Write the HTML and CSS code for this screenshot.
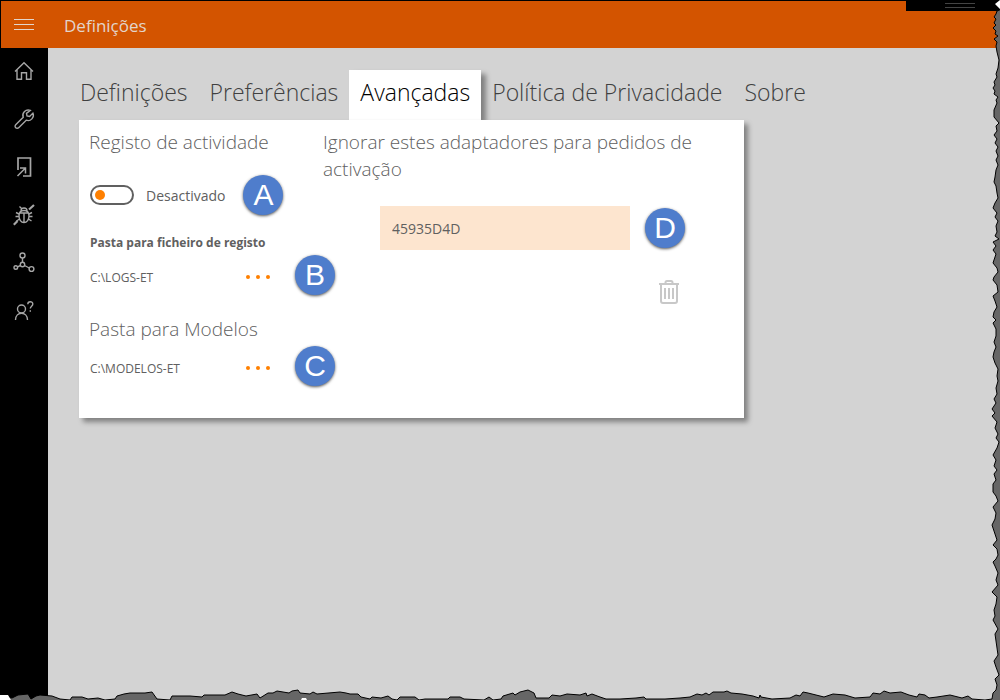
FILE: index.html
```html
<!DOCTYPE html>
<html lang="pt">
<head>
    <meta charset="UTF-8">
    <meta name="viewport" content="width=device-width, initial-scale=1.0">
    <title>Definições</title>
    <link rel="stylesheet" href="styles.css">
</head>
<body>
    <header class="topbar">
        <button class="menu-button" type="button" aria-label="Menu">
            <svg width="20" height="12" viewBox="0 0 20 12"><path d="M0 .5h20M0 5.5h20M0 10.5h20"/></svg>
        </button>
        <h1>Definições</h1>
        <div class="window-grip"></div>
    </header>

    <div class="layout">
        <nav class="sidebar">
            <a href="#" aria-label="Início">
                <svg width="24" height="24" viewBox="0 0 24 24"><path d="M3 12.5 12 3.7l9 8.8M5 11v9.3h4.5v-6.6h5v6.6H19V11"/></svg>
            </a>
            <a href="#" aria-label="Ferramentas">
                <svg width="24" height="24" viewBox="0 0 24 24"><path d="M18.3 3.400a5.400 5.400 0 0 0-7.100 6.900l-7.500 7.400a2.100 2.100 0 0 0 3 3l7.500-7.500a5.300 5.300 0 0 0 6.700-7.100l-3.300 3.300-2.600-.5-.5-2.500z"/></svg>
            </a>
            <a href="#" aria-label="Atalho">
                <svg width="24" height="24" viewBox="0 0 24 24"><path stroke-width="1.7" d="M6 15V3h12.500v18H11"/><path stroke-width="1.5" d="M5.500 21l8-8M8 13h5.500v5.500"/></svg>
            </a>
            <a href="#" aria-label="Diagnóstico">
                <svg width="24" height="24" viewBox="0 0 24 24"><path d="M12 7.500c-3 0-5 2-5 5.500s2 6.500 5 6.500 5-3 5-6.500-2-5.500-5-5.500zM7.500 10h9M12 10v9.500M9 8c0-4 6-4 6 0M9.500 5.500 7.500 3.500M7 11 4 9.500M7 13.500H3.500M7.500 16 4.500 18M17 11l3-1.500M17 13.500h3.500M16.500 16l3 2"/><path stroke-width="2.2" d="M17 6.500 22 2M5.500 18 1.800 21.700"/></svg>
            </a>
            <a href="#" aria-label="Rede">
                <svg width="24" height="24" viewBox="0 0 24 24"><circle cx="10.5" cy="4.5" r="2.500"/><circle cx="10.5" cy="13.5" r="2.200"/><circle cx="3.800" cy="16.500" r="1.800"/><circle cx="19.500" cy="18" r="2.400"/><path d="M10.500 7v4.300M8.500 14.500l-3 1.300M12.500 14.500l4.800 2.500"/></svg>
            </a>
            <a href="#" aria-label="Ajuda">
                <svg width="24" height="24" viewBox="0 0 24 24"><circle cx="9.500" cy="10" r="4"/><path d="M3.500 21c0-9 12-9 12 0M15.800 5.200c0-3.300 5-3.200 5-.2 0 2.200-2.500 2.200-2.500 4.500M18.300 11.200v1.500"/></svg>
            </a>
        </nav>

        <main class="content">
            <div class="tabs" role="tablist">
                <button class="tab" type="button" role="tab">Definições</button>
                <button class="tab" type="button" role="tab">Preferências</button>
                <button class="tab active" type="button" role="tab" aria-selected="true">Avançadas</button>
                <button class="tab" type="button" role="tab">Política de Privacidade</button>
                <button class="tab" type="button" role="tab">Sobre</button>
            </div>

            <section class="panel" role="tabpanel">
                <div class="folders">
                    <h2>Registo de actividade</h2>
                    <div class="row log-row">
                        <input class="switch" type="checkbox" id="log-switch">
                        <label for="log-switch">Desactivado</label>
                        <span class="badge">A</span>
                    </div>
                    <h3>Pasta para ficheiro de registo</h3>
                    <div class="row">
                        <span class="path">C:\LOGS-ET</span>
                        <button class="browse" type="button" aria-label="Procurar pasta de registo"><i></i><i></i><i></i></button>
                        <span class="badge">B</span>
                    </div>
                    <h2 class="models-title">Pasta para Modelos</h2>
                    <div class="row">
                        <span class="path">C:\MODELOS-ET</span>
                        <button class="browse" type="button" aria-label="Procurar pasta de modelos"><i></i><i></i><i></i></button>
                        <span class="badge">C</span>
                    </div>
                </div>

                <div class="adapters">
                    <h2><label for="adapter">Ignorar estes adaptadores para pedidos de activação</label></h2>
                    <div class="adapter-row">
                        <input class="adapter-input" id="adapter" type="text" value="45935D4D">
                        <span class="badge">D</span>
                    </div>
                    <div class="adapter-tools">
                        <button class="trash" type="button" aria-label="Eliminar">
                            <svg width="20" height="24" viewBox="0 0 20 24"><path d="M0 4h20M6.500 4V2.500Q6.500 1 8 1h4q1.500 0 1.500 1.500V4M2 4v17q0 2 2 2h12q2 0 2-2V4M6 8v11M10 8v11M14 8v11"/></svg>
                        </button>
                    </div>
                </div>
            </section>
        </main>
    </div>

    <!-- Torn paper border, right and bottom -->
    <svg class="torn-edge" viewBox="0 0 1000 700" preserveAspectRatio="none" aria-hidden="true">
        <path class="torn-paper" d="M1002 9 997 11 996 14 994 17 996 19 994 23 996 25 993 28 996 31 995 34 998 36 994 39 997 42 996 46 997 52 999 60 998 68 996 74 997 77 994 82 995 85 993 88 995 91 994 94 998 97 996 100 997 103 994 110 994 117 999 123 996 126 997 131 994 135 997 139 995 143 998 147 996 151 998 156 996 160 998 165 996 170 995 177 994 182 996 186 997 193 998 198 995 203 993 208 997 213 995 217 998 221 996 226 997 232 995 236 999 239 993 242 996 246 993 250 996 254 994 260 993 263 997 268 998 272 994 277 993 280 997 285 998 292 993 296 995 301 997 307 994 312 993 317 996 320 993 323 996 329 996 336 994 342 996 347 994 352 993 357 995 363 998 369 997 376 998 381 996 388 997 394 994 399 996 403 992 409 995 413 992 416 997 422 995 428 998 434 996 438 999 442 997 448 993 455 996 460 994 466 997 470 994 474 996 480 993 484 993 492 996 496 998 501 993 507 996 513 995 519 992 525 994 531 997 540 993 545 997 549 998 555 996 559 993 562 995 566 998 573 996 580 998 585 992 592 997 597 996 604 994 610 995 616 993 620 998 629 995 634 996 641 997 648 998 655 994 661 996 667 999 675 995 679 997 685 996 690 993 693 992 699 985 700 972 699 968 696 962 698 950 695 937 697 929 698 925 695 919 694 917 697 909 695 901 692 890 693 884 691 880 694 873 693 870 697 855 698 845 695 833 694 824 697 808 693 803 692 800 696 796 695 790 698 772 699 761 697 760 695 759 698 753 696 742 694 731 693 727 691 724 692 713 692 709 695 706 693 702 695 697 694 690 697 680 698 665 699 646 699 644 697 636 698 620 699 606 699 600 697 592 694 587 696 586 693 580 695 567 694 560 696 552 695 549 698 536 698 534 693 528 690 520 692 515 695 513 693 503 696 501 699 493 700 489 697 484 700 464 699 460 697 450 697 448 699 430 699 425 699 419 700 415 697 400 697 397 700 392 699 388 696 381 698 372 697 370 699 361 697 358 694 350 694 346 693 340 692 317 694 313 692 310 694 300 693 298 690 292 691 289 693 277 691 273 693 268 693 260 698 257 694 246 696 238 694 232 692 225 695 204 695 202 697 190 696 172 696 170 700 157 699 152 692 145 693 130 693 124 694 117 696 115 699 105 700 98 698 88 699 82 697 72 697 70 700 60 699 52 696 40 695 36 696 31 699 28 694 18 695 12 698 0 696 0 702 1002 702z"/>
        <path class="torn-white" d="M995 4l5-4v9zM0 695h8l3 5H0zM301 700l1-2h4l1 2z"/>
    </svg>
</body>
</html>
```
FILE: styles.css
```css
* {
    box-sizing: border-box;
}

body {
    display: flex;
    flex-direction: column;
    position: relative;
    min-height: 100vh;
    margin: 0;
    background-color: #d3d3d3;
    color: #606060;
    font-family: "Open Sans", "Noto Sans", sans-serif;
    overflow-x: hidden;
}

h1, h2, h3 {
    margin: 0;
}

button {
    padding: 0;
    border: none;
    background: none;
    font-family: inherit;
    cursor: pointer;
}

svg {
    display: block;
    fill: none;
    stroke: currentColor;
}

/* Top bar */
.topbar {
    display: flex;
    align-items: center;
    position: relative;
    height: 48px;
    border-top: 1px solid #000;
    border-left: 1px solid #000;
    background-color: #d35400;
    color: #e3d5cb;
}

.menu-button {
    display: flex;
    justify-content: center;
    width: 46px;
    color: inherit;
}

.topbar h1 {
    margin-left: 17px;
    padding-top: 2px;
    font-size: 17px;
    font-weight: 400;
}

.window-grip {
    position: absolute;
    top: -1px;
    right: 0;
    display: flex;
    justify-content: center;
    align-items: center;
    width: 94px;
    height: 11px;
    padding-left: 14px;
    background-color: #000;
}

.window-grip::before {
    content: "";
    width: 30px;
    height: 3px;
    border-top: 1px solid #444;
    border-bottom: 1px solid #444;
}

/* Side menu */
.layout {
    display: flex;
    flex: 1;
}

.sidebar {
    flex: none;
    width: 48px;
    background-color: #000;
}

.sidebar a {
    display: flex;
    justify-content: center;
    padding-top: 11px;
    height: 48px;
    color: #a6a6a6;
}

.sidebar svg {
    stroke-width: 1.4;
}

/* Tabs */
.content {
    flex: 1;
    min-width: 0;
    padding: 22px 31px;
}

.tabs {
    display: flex;
    margin-left: -10px;
}

.tab {
    height: 50px;
    padding: 0 11px 6px;
    color: #404040;
    font-size: 23px;
    font-weight: 300;
    white-space: nowrap;
}

.tab.active {
    background-color: #fff;
    box-shadow: 5px 4px 5px #808080;
    color: #000;
}

/* Panel */
.panel {
    display: flex;
    position: relative;
    max-width: 665px;
    padding: 9px 10px 32px;
    background-color: #fff;
    box-shadow: 4px 4px 5px #808080;
}

.panel h2 {
    color: #606060;
    font-size: 19px;
    font-weight: 300;
    line-height: 27px;
}

.panel h3 {
    margin: 19px 0 3px;
    padding-left: 1px;
    font-size: 12px;
    font-weight: 700;
    line-height: 18px;
}

.folders {
    flex: none;
    width: 234px;
}

.folders .models-title {
    margin: 21px 0 3px;
}

.row {
    display: flex;
    align-items: center;
    height: 40px;
    padding-left: 1px;
}

.row .badge {
    margin-left: 24px;
}

.log-row {
    margin-top: 19px;
    font-size: 14px;
}

.log-row label {
    margin-left: 12px;
}

.log-row .badge {
    margin-left: 18px;
}

.switch {
    appearance: none;
    flex: none;
    display: flex;
    align-items: center;
    width: 44px;
    height: 20px;
    margin: 0;
    padding-left: 3px;
    border: 2px solid #606060;
    border-radius: 10px;
}

.switch::before {
    content: "";
    width: 10px;
    height: 10px;
    border-radius: 50%;
    background-color: #ff8000;
}

.path {
    flex: none;
    width: 155px;
    padding-top: 4px;
    font-size: 12px;
}

.browse {
    display: flex;
    flex: none;
    gap: 6px;
    padding: 8px 1px 4px;
}

.browse i {
    width: 4px;
    height: 4px;
    border-radius: 50%;
    background-color: #ff8000;
}

.badge {
    display: flex;
    flex: none;
    justify-content: center;
    align-items: center;
    width: 40px;
    height: 40px;
    border-radius: 50%;
    background-color: #4f7dcc;
    box-shadow: 0 1px 3px #555;
    color: #fff;
    font-family: "Liberation Sans", sans-serif;
    font-size: 30px;
}

.adapters {
    flex: 1;
    min-width: 0;
}

.adapter-row {
    display: flex;
    align-items: center;
    gap: 15px;
    margin: 23px 0 0 57px;
}

.adapter-input {
    width: 250px;
    height: 44px;
    padding: 0 12px;
    border: none;
    background-color: #fde5cf;
    color: #606060;
    font-family: inherit;
    font-size: 14px;
}

.adapter-tools {
    display: flex;
    justify-content: flex-end;
    padding: 30px 55px 0 0;
}

.trash {
    color: #c8c8c8;
}

.trash svg {
    stroke-width: 2;
}

/* Torn paper border */
.torn-edge {
    position: absolute;
    inset: 0;
    width: 100%;
    height: 100%;
    pointer-events: none;
}

.torn-paper {
    fill: #666;
    stroke: #000;
}

.torn-white {
    fill: #fff;
    stroke: none;
}
```
